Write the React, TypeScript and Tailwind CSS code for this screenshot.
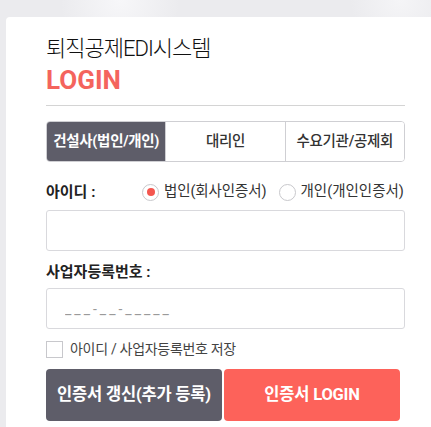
import { useState } from 'react';

const FONT = "font-['Roboto','Noto_Sans_CJK_KR',sans-serif]";

const TABS = ['건설사(법인/개인)', '대리인', '수요기관/공제회'];

export default function App() {
  const [tab, setTab] = useState(0);
  const [kind, setKind] = useState<'corp' | 'person'>('corp');
  const [save, setSave] = useState(false);

  return (
    <div
      className={`${FONT} w-[431px] h-[427px] overflow-hidden bg-[#ebebee] bg-[radial-gradient(circle_at_120px_0px,#f7f7f9_0,transparent_60px),radial-gradient(circle_at_400px_0px,#f5f5f7_0,transparent_50px)] pt-[17px] pl-[6px]`}
    >
      <div className="w-[439px] h-[440px] bg-white rounded-tl-[4px] px-[40px] pt-[19px]">
        {/* heading */}
        <h1 className="text-[22px] leading-[26px] font-light tracking-[-1px] text-[#111]">
          퇴직공제EDI시스템
        </h1>
        <div className="text-[26px] leading-[30px] font-bold text-[#f4645d] mt-[3px]">
          LOGIN
        </div>
        <div className="h-px bg-[#d4d4d4] mt-[10px]" />

        {/* tabs */}
        <div className="mt-[15px] flex h-[41px] border border-[#cfcfd3] rounded-[4px] overflow-hidden">
          {TABS.map((t, i) => (
            <button
              key={t}
              onClick={() => setTab(i)}
              className={`flex-1 flex items-center justify-center text-[14.5px] tracking-[-0.3px] whitespace-nowrap ${
                i > 0 ? 'border-l border-[#cfcfd3]' : ''
              } ${
                tab === i
                  ? 'bg-[#5e5d69] text-white font-bold'
                  : 'bg-white text-[#333] font-medium'
              }`}
            >
              {t}
            </button>
          ))}
        </div>

        {/* id type */}
        <div className="mt-[19px] flex items-center h-[22px] whitespace-nowrap">
          <span className="text-[15px] font-bold text-[#222] w-[96px]">아이디 :</span>
          <label
            className="flex items-center gap-[5px] text-[14.5px] tracking-[-0.1px] text-[#333] cursor-pointer"
            onClick={() => setKind('corp')}
          >
            <span className="w-[17px] h-[17px] rounded-full border border-[#c8c8cc] flex items-center justify-center">
              {kind === 'corp' && <span className="w-[8px] h-[8px] rounded-full bg-[#f4564f]" />}
            </span>
            법인(회사인증서)
          </label>
          <label
            className="ml-[12px] flex items-center gap-[5px] text-[14.5px] tracking-[0px] text-[#333] cursor-pointer"
            onClick={() => setKind('person')}
          >
            <span className="w-[17px] h-[17px] rounded-full border border-[#c8c8cc] flex items-center justify-center">
              {kind === 'person' && <span className="w-[8px] h-[8px] rounded-full bg-[#f4564f]" />}
            </span>
            개인(개인인증서)
          </label>
        </div>
        <input
          className="mt-[7px] block w-[359px] h-[41px] border border-[#d9d9dd] rounded-[3px] px-[18px] outline-none"
          type="text"
        />

        <div className="mt-[10px] text-[15px] font-bold text-[#222] leading-[22px]">
          사업자등록번호 :
        </div>
        <input
          className="mt-[5px] block w-[359px] h-[41px] border border-[#d9d9dd] rounded-[3px] px-[18px] text-[14px] tracking-[3px] placeholder:text-[#9a9a9a] outline-none"
          type="text"
          placeholder="___-__-_____"
        />

        <label className="mt-[10px] flex items-center gap-[7px] text-[14px] tracking-[-0.3px] text-[#444] cursor-pointer h-[20px]">
          <input
            type="checkbox"
            className="w-[17px] h-[17px] appearance-none border border-[#c8c8cc] bg-white checked:bg-[#5e5d69]"
            checked={save}
            onChange={(e) => setSave(e.target.checked)}
          />
          아이디 / 사업자등록번호 저장
        </label>

        <div className="mt-[10px] flex gap-[2px] w-[354px]">
          <button className="w-[176px] h-[52px] rounded-[4px] bg-[#5e5d69] text-white text-[16.5px] font-bold tracking-[-0.2px]">
            인증서 갱신(추가 등록)
          </button>
          <button className="flex-1 h-[52px] rounded-[4px] bg-[#fd625a] text-white text-[16.5px] font-bold tracking-[-0.2px]">
            인증서 LOGIN
          </button>
        </div>
      </div>
    </div>
  );
}
